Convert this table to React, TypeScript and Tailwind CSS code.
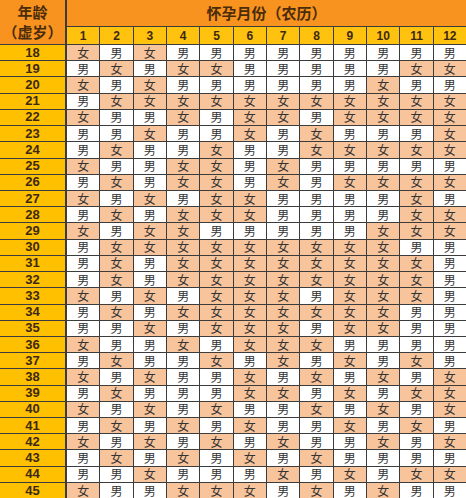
const rows: [number, string][] = [
  [18, "女男女男男男男男男男男男"],
  [19, "男女男女女男男男男男女女"],
  [20, "女男女男男男男男男女男男"],
  [21, "男女女女女女女女女女女女"],
  [22, "女男男女男女女男女女女女"],
  [23, "男男女男男女男女男男男女"],
  [24, "男女男男女男男女女女女女"],
  [25, "女男男女女男女男男男男男"],
  [26, "男女男女女男女男女女女女"],
  [27, "女男女男女女男男男男女男"],
  [28, "男女男女女女男男男男女女"],
  [29, "女男女女男男男男男女女女"],
  [30, "男女女女女女女女女女男男"],
  [31, "男女男女女女女女女女女男"],
  [32, "男女男女女女女女女女女男"],
  [33, "女男女男女女女男女女女男"],
  [34, "男女男女女女女女女女男男"],
  [35, "男男女男女女女男女女男男"],
  [36, "女男男女男女女女男男男男"],
  [37, "男女男男女男女男女男女男"],
  [38, "女男女男男女男女男女男女"],
  [39, "男女男男男女女男女男女女"],
  [40, "女男女男女男男女男女男女"],
  [41, "男女男女男女男男女男女男"],
  [42, "女男女男女男女男男女男女"],
  [43, "男女男女男女男女男男男男"],
  [44, "男男女男男男女男女男女女"],
  [45, "女男男女女女男女男女男男"],
];

const months = [1, 2, 3, 4, 5, 6, 7, 8, 9, 10, 11, 12];

export default function App() {
  return (
    <div className="flex w-[466px] h-[498px] overflow-hidden gap-[2px] bg-[#3c3c3c] font-['Noto_Sans_CJK_SC',sans-serif]">
      {/* Age column */}
      <div className="flex flex-col gap-px w-[65px] min-h-0">
        <div className="h-[44px] shrink-0 bg-[#f7931e] flex flex-col items-center justify-center text-[15px] leading-[20px] font-bold text-[#4a2c0c]">
          <span>年龄</span>
          <span>（虚岁）</span>
        </div>
        {rows.map(([age]) => (
          <div
            key={age}
            className="flex-1 min-h-0 bg-[#ffc000] flex items-center justify-center font-['Liberation_Sans',sans-serif] text-[13px] leading-[14px] font-bold text-[#3d2a0e]"
          >
            {age}
          </div>
        ))}
      </div>

      {/* Month grid */}
      <div className="flex flex-col gap-px flex-1 min-h-0">
        <div className="h-[26px] shrink-0 bg-[#f7931e] flex items-center justify-center text-[15px] font-bold text-[#4a2c0c]">
          怀孕月份（农历）
        </div>
        <div className="h-[17px] shrink-0 grid grid-cols-12 gap-px">
          {months.map((m) => (
            <div
              key={m}
              className="bg-[#ffc20e] flex items-center justify-center font-['Liberation_Sans',sans-serif] text-[12px] leading-none font-bold text-[#3d2a0e]"
            >
              {m}
            </div>
          ))}
        </div>
        {rows.map(([age, cells]) => (
          <div key={age} className="flex-1 min-h-0 grid grid-cols-12 gap-px">
            {cells.split("").map((c, i) => (
              <div
                key={i}
                className={
                  c === "女"
                    ? "bg-[#f8c49c] min-h-0 flex items-center justify-center text-[12px] leading-[14px] text-[#333]"
                    : "bg-white min-h-0 flex items-center justify-center text-[12px] leading-[14px] text-[#333]"
                }
              >
                {c}
              </div>
            ))}
          </div>
        ))}
      </div>
    </div>
  );
}
